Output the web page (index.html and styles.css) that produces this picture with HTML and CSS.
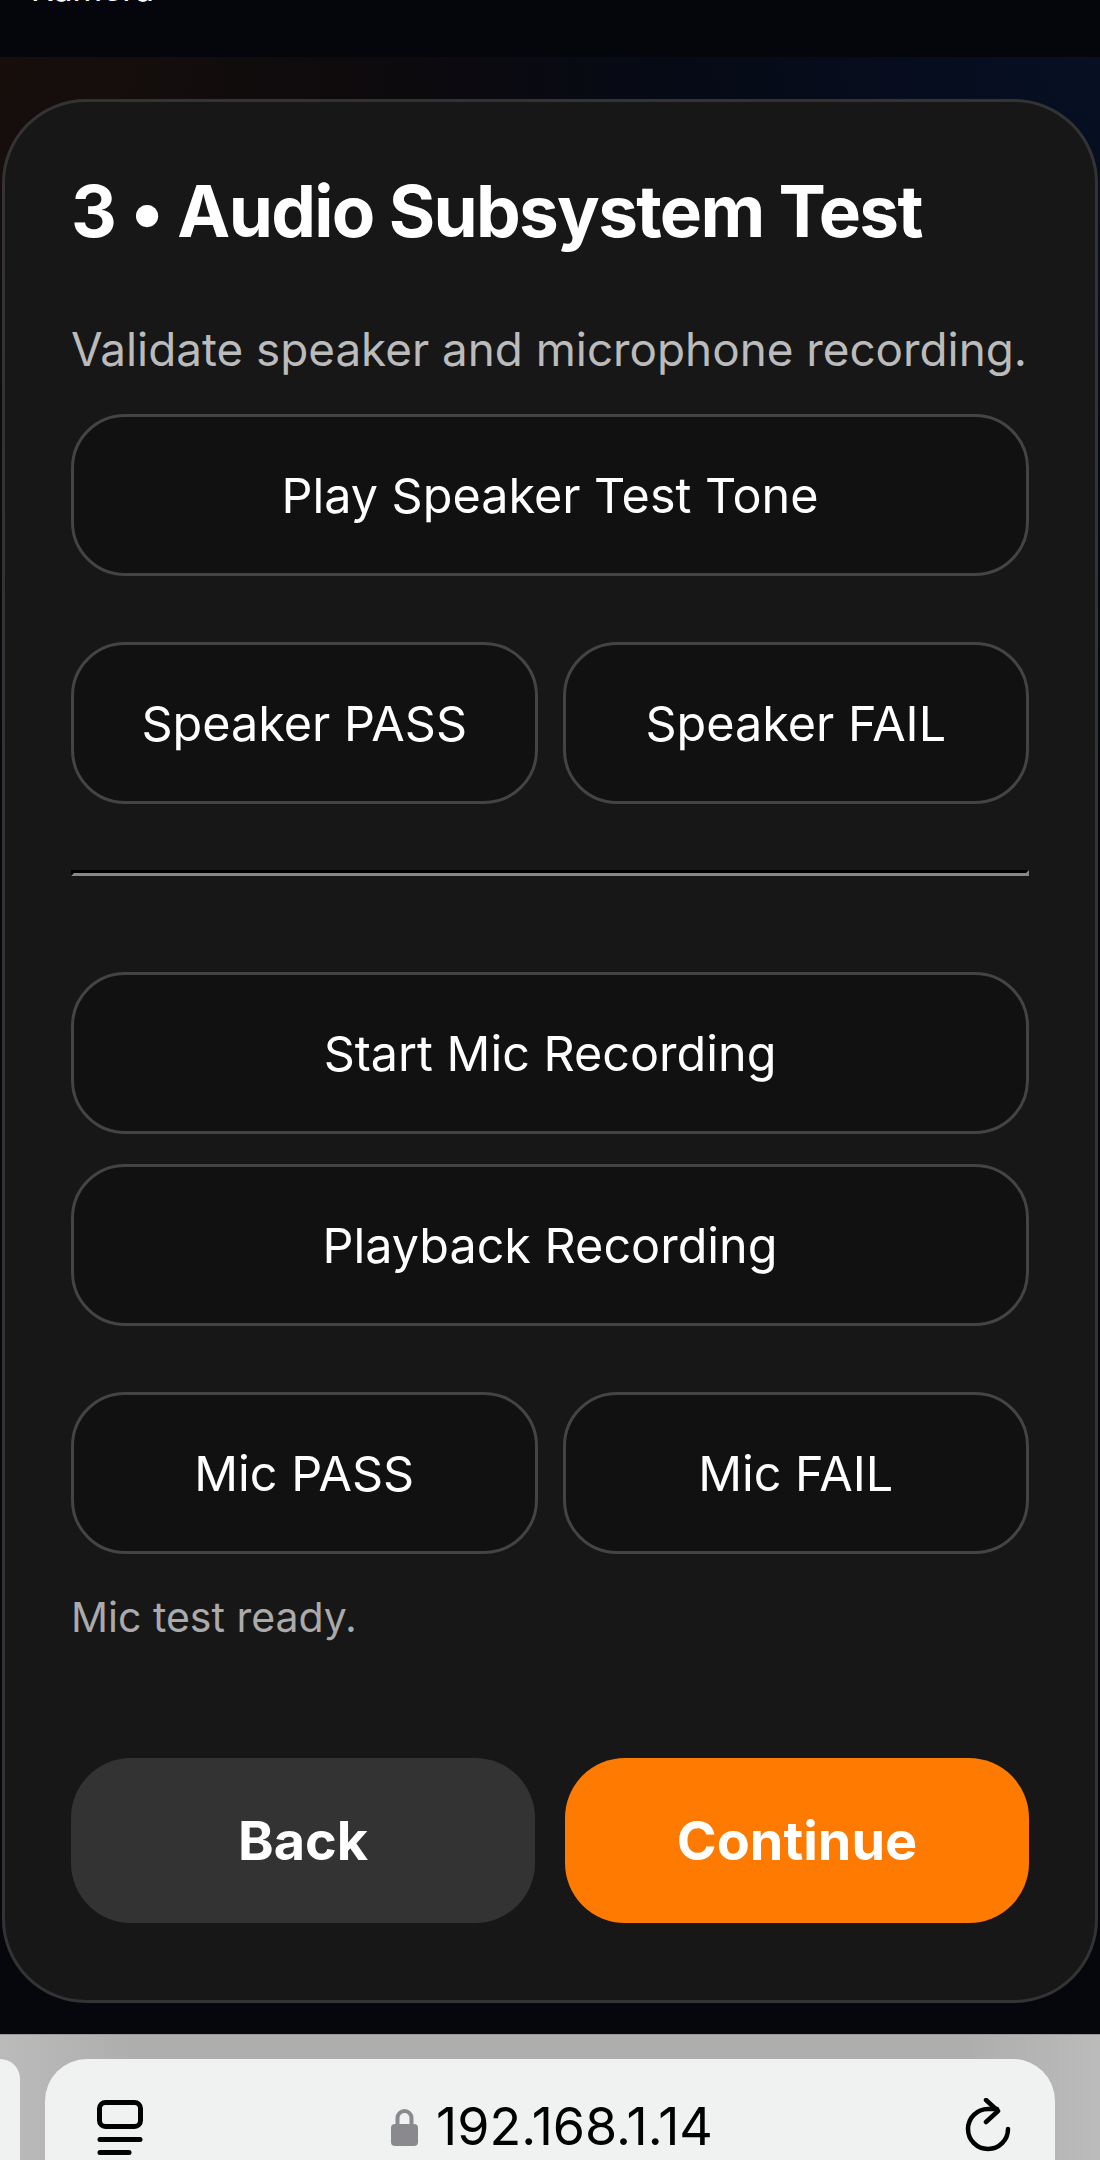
FILE: index.html
```html
<!DOCTYPE html>
<html lang="en">
<head>
    <meta charset="UTF-8">
    <meta name="viewport" content="width=device-width, initial-scale=1.0">
    <title>Audio Subsystem Test</title>
    <link rel="stylesheet" href="styles.css">
</head>
<body>

<div class="top-band">
    <span class="top-label">• Kamera</span>
</div>

<main class="stage">
    <section class="card">
        <h1>3 • Audio Subsystem Test</h1>
        <p class="intro">Validate speaker and microphone recording.</p>

        <button class="test-btn" type="button">Play Speaker Test Tone</button>
        <div class="btn-row">
            <button class="test-btn" type="button">Speaker PASS</button>
            <button class="test-btn" type="button">Speaker FAIL</button>
        </div>

        <hr class="divider">

        <div class="btn-stack">
            <button class="test-btn" type="button">Start Mic Recording</button>
            <button class="test-btn" type="button">Playback Recording</button>
        </div>
        <div class="btn-row">
            <button class="test-btn" type="button">Mic PASS</button>
            <button class="test-btn" type="button">Mic FAIL</button>
        </div>

        <p class="status">Mic test ready.</p>

        <div class="nav-row">
            <button class="nav-btn back" type="button">Back</button>
            <button class="nav-btn continue" type="button">Continue</button>
        </div>
    </section>
</main>

<footer class="toolbar">
    <div class="prev-tab"></div>
    <div class="address-bar">
        <svg class="icon-tabs" width="46" height="56" viewBox="0 0 46 56" fill="none" stroke="#000" stroke-width="5" stroke-linecap="round">
            <rect x="2.5" y="2.5" width="41" height="24" rx="6"/>
            <path d="M3 39.5H43"/>
            <path d="M3 52.5H32"/>
        </svg>
        <div class="address">
            <svg width="27" height="39" viewBox="0 0 27 39" fill="none">
                <path d="M6.5 19V11a7 7 0 0 1 14 0v8" stroke="#8a8a8e" stroke-width="4"/>
                <rect y="17" width="27" height="22" rx="4" fill="#8a8a8e"/>
            </svg>
            <span>192.168.1.14</span>
        </div>
        <svg class="icon-reload" width="46" height="54" viewBox="0 0 46 54" fill="none" stroke="#000" stroke-width="4.5" stroke-linecap="round" stroke-linejoin="round">
            <path d="M43 31A20 20 0 1 1 23 11H32"/>
            <path d="M21 2L33 13L21 24"/>
        </svg>
    </div>
</footer>

</body>
</html>
```

FILE: styles.css
```css
*{
    padding: 0;
    margin: 0;
    box-sizing: border-box;
}

body{
    width: 1100px;
    height: 2160px;
    overflow: hidden;
    background-color: #05070d;
    font-family: Inter, "Liberation Sans", sans-serif;
    color: #fff;
}

.top-band{
    height: 57px;
    overflow: hidden;
    background-color: #05060b;
}

.top-label{
    display: block;
    margin: -38px 0 0 2px;
    font-size: 34px;
    line-height: 54px;
}

.stage{
    height: 1977px;
    padding: 42px 2px 0 2px;
    background-color: #05070d;
    background-image:
        radial-gradient(circle at 0 0, rgba(255, 110, 0, 0.075), transparent 700px),
        radial-gradient(circle at 100% 0, rgba(20, 70, 190, 0.13), transparent 700px);
}

.card{
    height: 1904px;
    padding: 66px 66px 0 66px;
    background-color: #171717;
    border: 3px solid #333;
    border-radius: 84px;
}

h1{
    font-size: 71px;
    line-height: 86px;
    font-weight: 700;
    letter-spacing: -1.7px;
}

.intro{
    margin-top: 69px;
    font-size: 45.8px;
    line-height: 54px;
    white-space: nowrap;
    color: #bbb;
}

.test-btn{
    display: block;
    width: 100%;
    height: 162px;
    font-family: inherit;
    font-size: 48.5px;
    color: #fff;
    background-color: #111;
    border: 3px solid #444;
    border-radius: 54px;
}

.intro + .test-btn{
    margin-top: 37px;
}

.btn-row{
    display: grid;
    grid-template-columns: 1fr 1fr;
    gap: 25px;
    margin-top: 66px;
}

.btn-stack{
    display: flex;
    flex-direction: column;
    gap: 30px;
}

.divider{
    height: 6px;
    margin: 66px 0 96px 0;
    border: 3px solid;
    border-color: #000 #888 #888 #000;
}

.status{
    margin-top: 40px;
    font-size: 41px;
    line-height: 47px;
    color: #aaa;
}

.nav-row{
    display: grid;
    grid-template-columns: 1fr 1fr;
    gap: 30px;
    margin-top: 117px;
}

.nav-btn{
    height: 165px;
    font-family: inherit;
    font-size: 54px;
    font-weight: 700;
    color: #fff;
    border: none;
    border-radius: 60px;
}

.back{
    background-color: #333;
}

.continue{
    background-color: #ff7a00;
}

.toolbar{
    display: flex;
    gap: 25px;
    height: 126px;
    padding-top: 24px;
    border-top: 1px solid #999;
    background-color: #b0b0b0;
    background-image: linear-gradient(to right, #bbb, #aeaeae 12%, #aeaeae 88%, #bbb);
}

.prev-tab{
    width: 20px;
    background-color: #f0f1f1;
    border-radius: 0 42px 0 0;
}

.address-bar{
    display: grid;
    grid-template-columns: 1fr auto 1fr;
    align-items: start;
    width: 1010px;
    padding: 39px 44px 0 52px;
    background-color: #f0f1f1;
    border-radius: 42px 42px 0 0;
}

.address{
    display: flex;
    align-items: center;
    gap: 18px;
    margin: 9px 4px 0 0;
    font-size: 52px;
    line-height: 39px;
    color: #000;
}

.icon-tabs{
    margin-top: 2px;
}

.icon-reload{
    justify-self: end;
}
```
